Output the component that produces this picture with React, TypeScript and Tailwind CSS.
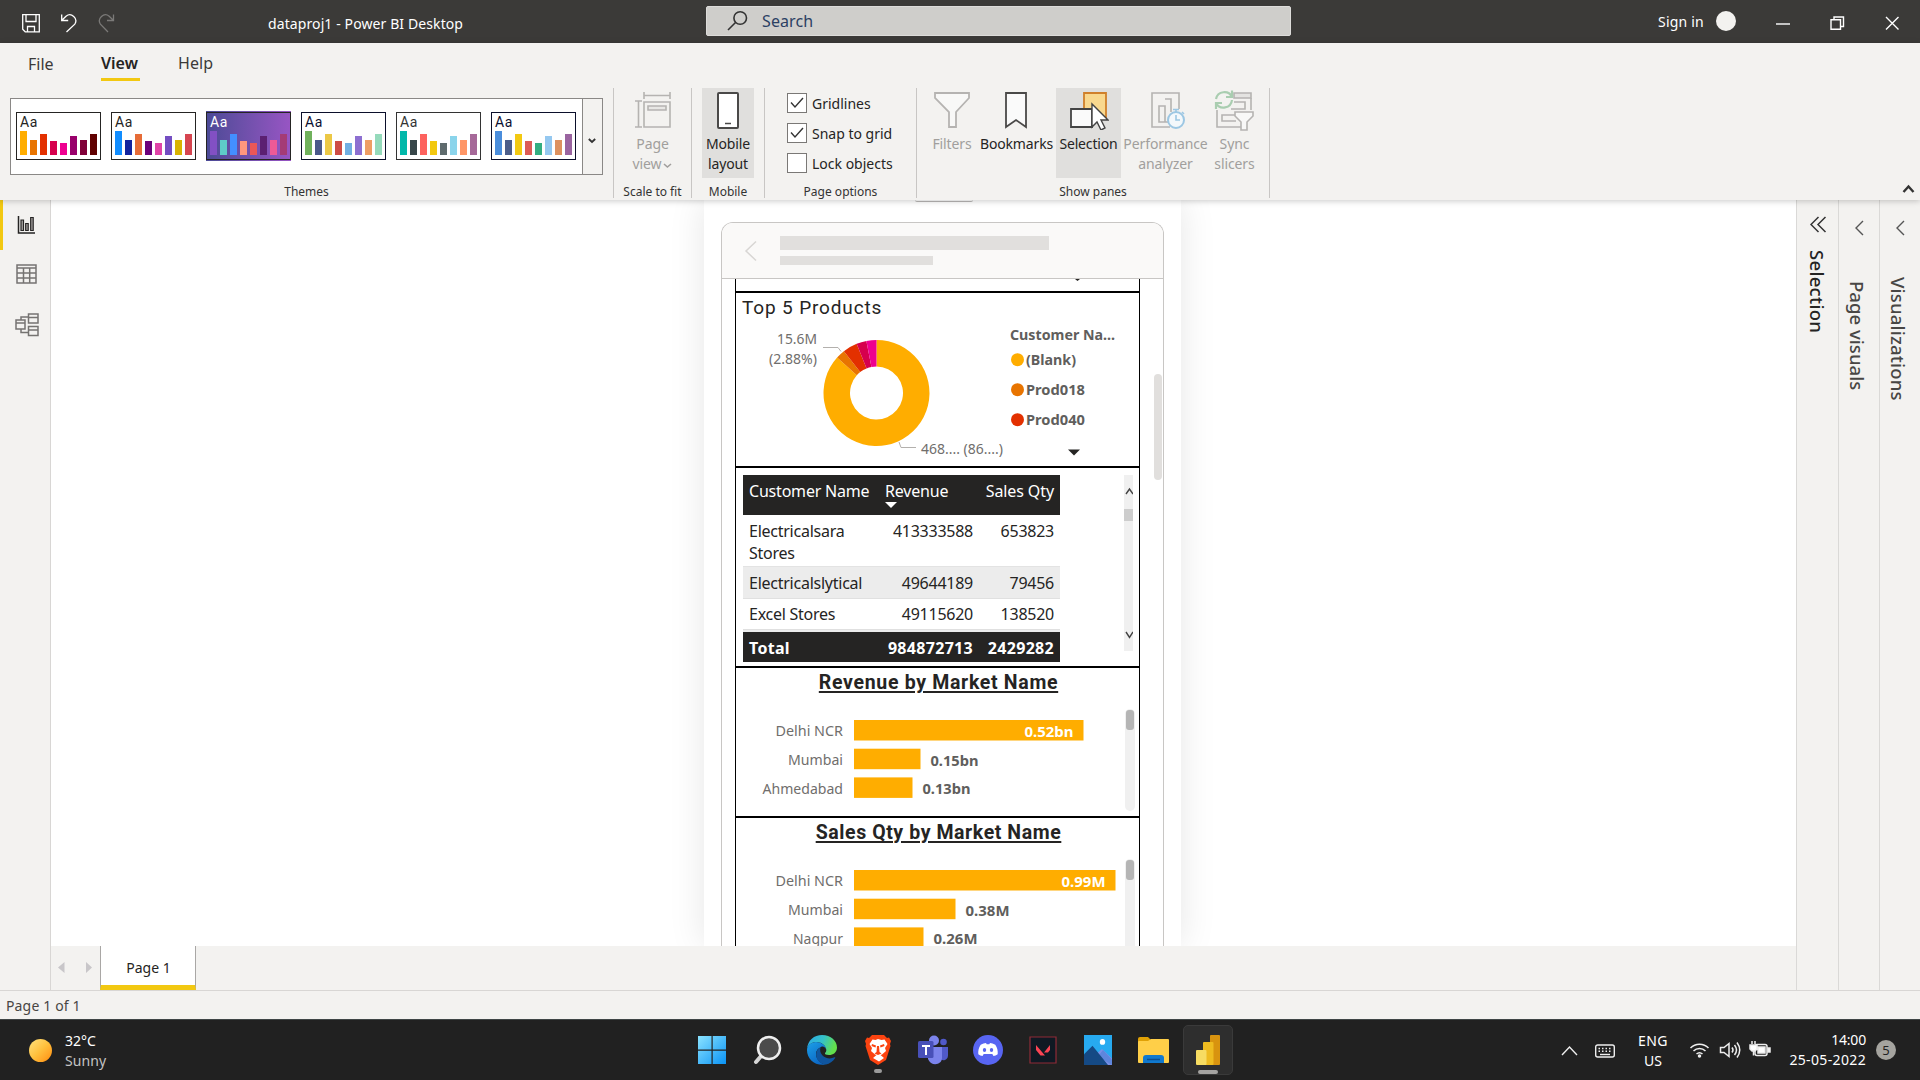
import React from 'react';

const THEMES = [
  { border: 'border-[#252423]', text: 'text-[#252423]', colors: ['#ffad00', '#e87400', '#e33000', '#d6004d', '#ee0090', '#99006b', '#800038', '#600000'] },
  { border: 'border-[#252423]', text: 'text-[#252423]', colors: ['#118dff', '#12239e', '#e66c37', '#6b007b', '#e044a7', '#744ec2', '#d9b300', '#d64550'] },
  { border: 'border-[#252423]', text: 'text-white', dark: true, colors: ['#8250c4', '#5ecbc8', '#438fff', '#ff977e', '#eb5757', '#5b2071', '#ec5a96', '#a43b76'] },
  { border: 'border-[#0b0f2b]', text: 'text-[#0b1030]', colors: ['#70b15c', '#4a588a', '#ecc846', '#cd4c46', '#71afe2', '#8d6fd1', '#ee9e64', '#95dabb'] },
  { border: 'border-[#333333]', text: 'text-[#333333]', colors: ['#01b8aa', '#374649', '#fd625e', '#f2c80f', '#5f6b6d', '#8ad4eb', '#fe9666', '#a66999'] },
  { border: 'border-[#0b0f2b]', text: 'text-[#0b1030]', colors: ['#4a8ddc', '#4c5d8a', '#f3c911', '#dc5b57', '#33ae81', '#95c8f0', '#dd915f', '#9a64a0'] },
];
const BAR_HEIGHTS = [24, 15, 21, 14, 12, 19, 15, 21];

function ThemeThumb({ theme }: { theme: (typeof THEMES)[number] }) {
  return (
    <div className={theme.dark ? 'bg-linear-to-r from-[#4b4a96] to-[#9855c4] py-px' : 'py-px'}>
      <div className={`flex h-12 w-[85px] flex-col border ${theme.border} ${theme.dark ? '' : 'bg-white'}`}>
        <span className={`ml-[3px] h-[18px] font-['Roboto'] text-[14px] leading-[19px] tracking-[0.5px] ${theme.text}`}>Aa</span>
        <svg className="ml-[3px]" width="80" height="24" shapeRendering="crispEdges">
          {theme.colors.map((c, i) => (
            <rect key={i} x={i * 10} y={24 - BAR_HEIGHTS[i]} width="7" height={BAR_HEIGHTS[i]} fill={c} />
          ))}
        </svg>
      </div>
    </div>
  );
}

function TitleBar() {
  return (
    <header className="flex h-[43px] shrink-0 bg-[#3b3a38] text-white">
      <div className="flex w-[706px] items-start">
        <svg className="ml-[22px] mt-[14px]" width="94" height="19" fill="none" stroke="#fff" strokeWidth="1.3">
          <path d="M.7.7h16.6v17.1H3.2L.7 15.3zM4 .7v6.8h10V.7M5.5 17.5v-5h7v5" />
          <path d="M39.7 .5v6h6.5M39.9 6.3 44 2.2a6 6 0 0 1 8.8 7.9L44.5 18" />
          <path stroke="#7b7a78" d="M91.5 .5v6h-6.5M91.3 6.3 87.2 2.2a6 6 0 0 0-8.8 7.9L86 18" />
        </svg>
        <span className="ml-[152px] mt-[14px] text-[14px] leading-[20px] whitespace-nowrap tracking-[0.1px]">dataproj1 - Power BI Desktop</span>
      </div>
      <div className="mt-[6px] flex h-[30px] w-[585px] items-center rounded-[2px] border border-[#dddcda] bg-[#cfcecb]">
        <svg className="ml-[20px]" width="22" height="22" fill="none" stroke="#333" strokeWidth="1.6">
          <circle cx="13.2" cy="8" r="6.3" />
          <path d="M8.5 12.5 1 20" />
        </svg>
        <span className="ml-[13px] text-[16px] leading-[28px] text-[#2b4063] tracking-[0.1px]">Search</span>
      </div>
      <span className="ml-[367px] mt-[12px] text-[14px] leading-[20px] tracking-[0.2px]">Sign in</span>
      <div className="ml-auto mr-[19px] mt-[11px] flex">
        <span className="size-5 rounded-full bg-[#f3f2f0]" />
        <svg className="ml-[39px]" width="126" height="22" fill="none" stroke="#fff" strokeWidth="1.4">
          <path d="M1 13h14" />
          <path d="M56 8.7h9.5v9.5H56zM59 8.5V6h9.5v9.5h-3" />
          <path d="m111 6 12.5 12.5M123.5 6 111 18.5" />
        </svg>
      </div>
    </header>
  );
}

function Check({ label, on }: { label: string; on?: boolean }) {
  return (
    <div className="flex h-[30px] items-center">
      <span className="flex size-[20px] items-center justify-center border border-[#7a7876] bg-white">
        {on && (
          <svg width="14" height="12" fill="none" stroke="#333" strokeWidth="1.4"><path d="m1 5.5 4 4.5 8-9" /></svg>
        )}
      </span>
      <span className="mt-[2px] ml-[5px] text-[14px] leading-5 text-[#252423]">{label}</span>
    </div>
  );
}

function RibbonButton({ icon, lines, width, active, disabled }: { icon: React.ReactNode; lines: React.ReactNode[]; width: string; active?: boolean; disabled?: boolean }) {
  return (
    <div className={`flex h-[90px] shrink-0 flex-col items-center ${width} ${active ? 'bg-[#e0dfdd]' : ''}`}>
      <div className="flex h-[46px] items-start pt-[2px]">{icon}</div>
      {lines.map((l, i) => (
        <span key={i} className={`flex items-center text-[14px] leading-[20px] whitespace-nowrap ${disabled ? 'tracking-[-0.1px] text-[#a19f9d]' : 'tracking-[-0.15px] text-[#252423]'}`}>{l}</span>
      ))}
    </div>
  );
}

function Group({ label, width, children }: { label: string; width: string; children: React.ReactNode }) {
  return (
    <div className={`flex h-[110px] shrink-0 flex-col border-r border-[#c8c6c4] ${width}`}>
      <div className="flex h-[90px] shrink-0">{children}</div>
      <span className="mt-[6px] h-[14px] text-center text-[12px] leading-[16px] whitespace-nowrap text-[#333]">{label}</span>
    </div>
  );
}

const g = '#b5b3b1';

function Ribbon() {
  return (
    <div className="relative z-10 flex h-[157px] shrink-0 flex-col bg-[#f3f2f0] shadow-[0_1px_6px_rgba(0,0,0,0.22)]">
      <nav className="flex h-[45px] items-start pl-[28px] text-[16px] text-[#3b3a39]">
        <span className="mt-[9px] w-[73px] leading-[24px]">File</span>
        <span className="mt-[8px] mr-[38px] h-[30px] w-[39px] border-b-[3px] border-[#f2c811] leading-[24px] font-semibold text-[#252423]">View</span>
        <span className="mt-[8px] leading-[24px] tracking-[0.1px]">Help</span>
      </nav>
      <div className="flex">
        <Group label="Themes" width="w-[614px]">
          <div className="mt-[10px] ml-[10px] flex h-[77px] w-[593px] items-center border border-[#8a8886] bg-white">
            <div className="flex h-full w-[571px] items-center gap-[10px] pb-px pl-[5px]">
              {THEMES.map((t, i) => <ThemeThumb key={i} theme={t} />)}
            </div>
            <div className="flex h-full flex-1 items-center justify-center border-l border-[#8a8886] bg-[#f3f2f0] pt-[8px] pr-[2px]">
              <svg width="8" height="6" fill="none" stroke="#333" strokeWidth="1.8"><path d="m.8 1 3.2 3 3.2-3" /></svg>
            </div>
          </div>
        </Group>
        <Group label="Scale to fit" width="w-[78px]">
          <RibbonButton disabled width="w-full" lines={['Page', <>view<svg className="mt-1 ml-[2px]" width="9" height="6" fill="none" stroke="#a19f9d" strokeWidth="1.6"><path d="m1 1 3.4 3L8 1" /></svg></>]}
            icon={
              <svg className="mr-px" width="37" height="40" fill="none" stroke={g} strokeWidth="1.6">
                <path d="M10 2v7M36 2v7M10 5.5h26M1 11h7M1 37h7M4.500 11v26M10 12h26v25H10z" /><path fill="#e8e7e5" d="M14 16h18v4H14z" />
              </svg>
            } />
        </Group>
        <Group label="Mobile" width="w-[73px]">
          <div className="w-[10px]" />
          <RibbonButton active width="w-[52px]" lines={['Mobile', 'layout']}
            icon={<svg className="mr-px" width="24" height="40" fill="#fff" stroke="#4a4948" strokeWidth="2"><rect x="2" y="3" width="20" height="35" rx="1" /><path d="M9 33.500h6" strokeWidth="1.5" /></svg>} />
        </Group>
        <Group label="Page options" width="w-[152px]">
          <div className="flex flex-col pl-[22px]">
            <Check label="Gridlines" on />
            <Check label="Snap to grid" on />
            <Check label="Lock objects" />
          </div>
        </Group>
        <Group label="Show panes" width="w-[353px]">
          <div className="w-[10px]" />
          <RibbonButton disabled width="w-[50px]" lines={['Filters']}
            icon={<svg className="mr-px" width="36" height="40" fill="#f8f8f7" stroke={g} strokeWidth="1.800"><path d="M1 3h34v5L22 22v15h-7V22L1 8z" /></svg>} />
          <RibbonButton width="w-[79px]" lines={['Bookmarks']}
            icon={<svg className="mr-[2px]" width="24" height="40" fill="#fafafa" stroke="#4a4948" strokeWidth="1.800"><path d="M2 3h20v34l-10-7-10 7z" /></svg>} />
          <RibbonButton active width="w-[65px]" lines={['Selection']}
            icon={
              <svg width="40" height="40">
                <path d="M15 3h22v24H15z" fill="#f9d88e" stroke="#d0802b" strokeWidth="1.800" />
                <path d="M2 19h21v18H2z" fill="#fafafa" stroke="#444" strokeWidth="1.800" />
                <path d="M23 14v23l5-5 4 8 4-2-4-8h7z" fill="#fff" stroke="#444" strokeWidth="1.400" />
              </svg>
            } />
          <RibbonButton disabled width="w-[89px]" lines={['Performance', 'analyzer']}
            icon={
              <svg className="ml-[4px]" width="36" height="40" fill="none" stroke={g} strokeWidth="1.600">
                <path d="M20 37H2V3h27v16M9 16h6v16H9zM15 9h6v13M15 32h3" />
                <circle cx="26" cy="30" r="8" fill="#f3f8fb" stroke="#9cc7e3" strokeWidth="2" />
                <path stroke="#9cc7e3" d="M26 25v5h4M23 19.500h6M26 20v2M32 22l2 2" />
              </svg>
            } />
          <RibbonButton disabled width="w-[49px]" lines={['Sync', 'slicers']}
            icon={
              <svg className="mr-px" width="40" height="42" fill="none" stroke={g} strokeWidth="1.600">
                <path fill="#e4e3e1" d="M20 3h17v5H20z" /><path d="M37 8v12M20 12h11v7H17M3 20v17h25M21 25H8v6h14" />
                <path fill="#f8f8f7" d="M21 22h18v4l-6 6v8h-6v-8l-6-6z" />
                <path stroke="#a9cdb0" strokeWidth="2.200" d="M2 9A8.500 8.500 0 0 1 18 7M18 .500V7h-6M18 10A8.500 8.500 0 0 1 2 13M2 19v-6h6" />
              </svg>
            } />
        </Group>
        <svg className="mt-[96px] mr-[5px] ml-auto" width="13" height="10" fill="none" stroke="#333" strokeWidth="2.4"><path d="m1.500 8 5-5.500 5 5.500" /></svg>
      </div>
    </div>
  );
}

function LeftRail() {
  return (
    <aside className="flex w-[51px] shrink-0 flex-col border-r border-[#d8d6d4] bg-[#f3f2f0]">
      <div className="flex h-[50px] border-l-[3px] border-[#f2c811] pt-[15px] pl-[14px]">
        <svg width="19" height="20" fill="none" stroke="#252423" strokeWidth="1.500">
          <path d="M1.500 1v17H18" /><path fill="#a8a6a4" strokeWidth="1.200" d="M4 5h2.500v10.500H4zM8.700 8.500h2.500v7H8.700zM13.700 2.500h2.500v13h-2.500z" />
        </svg>
      </div>
      <svg className="mt-[14px] ml-[16px]" width="21" height="20" fill="none" stroke="#757371" strokeWidth="1.500">
        <path d="M1 1h19v18H1zM1 4h19M1 9h19M1 14h19M7.500 4v15M13.700 4v15" />
      </svg>
      <svg className="mt-[29px] ml-[15px]" width="24" height="24" fill="none" stroke="#757371" strokeWidth="1.500">
        <path d="M1 7h9v9H1zM1 10h9M13.500 1H23v9h-9.500zM13.500 4.500H23M13.500 13.500H23v9h-9.500zM13.500 17H23M6 7V4h7.500M6 16v3.500h7.500" />
      </svg>
    </aside>
  );
}

const rad = (d: number) => (d * Math.PI) / 180;
function slice(cx: number, cy: number, R: number, r: number, a: number, b: number) {
  const p = (q: number, t: number) => `${cx + q * Math.sin(rad(t))} ${cy - q * Math.cos(rad(t))}`;
  const big = b - a > 180 ? 1 : 0;
  return `M${p(R, a)}A${R} ${R} 0 ${big} 1 ${p(R, b)}L${p(r, b)}A${r} ${r} 0 ${big} 0 ${p(r, a)}Z`;
}
const SLICES: [number, number, string][] = [
  [0, 312, '#ffad00'], [312, 322, '#e87400'], [322, 338, '#e33000'], [338, 349, '#d6004d'], [349, 360, '#ee0090'],
];

function Donut() {
  return (
    <svg width="403" height="130" className="block" fontFamily="'Noto Sans', sans-serif" fontSize="15">
      {SLICES.map(([a, b, c]) => <path key={c} d={slice(140.5, 66, 53, 26.5, a, b)} fill={c} />)}
      <path d="M87 20.500h15l3 4M163 115l2 5.500h15" fill="none" stroke="#b3b0ad" />
      <g fill="#706e6c" fontWeight="400">
        <text x="81" y="17" textAnchor="end" textLength="40" lengthAdjust="spacingAndGlyphs">15.6M</text>
        <text x="81" y="36.500" textAnchor="end" textLength="48" lengthAdjust="spacingAndGlyphs">(2.88%)</text>
        <text x="185" y="126.500" textLength="82" lengthAdjust="spacingAndGlyphs">468.... (86....)</text>
      </g>
      <g fill="#605e5c" fontWeight="700">
        <text x="274" y="13" textLength="105" lengthAdjust="spacingAndGlyphs">Customer Na...</text>
        <text x="290" y="38" textLength="50" lengthAdjust="spacingAndGlyphs">(Blank)</text>
        <text x="290" y="68" textLength="59" lengthAdjust="spacingAndGlyphs">Prod018</text>
        <text x="290" y="98" textLength="59" lengthAdjust="spacingAndGlyphs">Prod040</text>
      </g>
      <circle cx="281.500" cy="32.700" r="6.500" fill="#ffad00" />
      <circle cx="281.500" cy="62.700" r="6.500" fill="#e87400" />
      <circle cx="281.500" cy="92.700" r="6.500" fill="#e33000" />
      <path d="M332 122.500h12l-6 6z" fill="#252423" />
    </svg>
  );
}

type Bar = { name: string; nameW: number; w: number; value: string; valueW: number; inside?: boolean };
const REVENUE: Bar[] = [
  { name: 'Delhi NCR', nameW: 67.500, w: 229.500, value: '0.52bn', valueW: 49, inside: true },
  { name: 'Mumbai', nameW: 55, w: 66.500, value: '0.15bn', valueW: 48 },
  { name: 'Ahmedabad', nameW: 80.500, w: 58.500, value: '0.13bn', valueW: 48 },
];
const QTY: Bar[] = [
  { name: 'Delhi NCR', nameW: 67.500, w: 261.500, value: '0.99M', valueW: 44, inside: true },
  { name: 'Mumbai', nameW: 55, w: 101.500, value: '0.38M', valueW: 44 },
  { name: 'Nagpur', nameW: 50, w: 69.500, value: '0.26M', valueW: 44 },
];

function BarChart({ bars }: { bars: Bar[] }) {
  return (
    <svg width="403" height="106" className="block" fontFamily="'Noto Sans', sans-serif" fontSize="15">
      {bars.map((b, i) => {
        const y = 12 + i * 28.700;
        return (
          <g key={b.name}>
            <rect x="118" y={y} width={b.w} height="20.500" fill="#ffad00" />
            <text x="107" y={y + 16.200} textAnchor="end" fontWeight="400" fill="#706e6c" textLength={b.nameW} lengthAdjust="spacingAndGlyphs">{b.name}</text>
            <text x={b.inside ? 118 + b.w - 10 : 118 + b.w + 10} y={y + 17} textAnchor={b.inside ? 'end' : 'start'} fontWeight="700" fill={b.inside ? '#fff' : '#605e5c'} textLength={b.valueW} lengthAdjust="spacingAndGlyphs">{b.value}</text>
          </g>
        );
      })}
      <rect x="389" y="1" width="10" height="102" rx="5" fill="#f0f0f0" />
      <rect x="390" y="2" width="8" height="20" rx="3" fill="#b5b5b5" />
    </svg>
  );
}

function Row({ cells, className }: { cells: [string, string, string]; className: string }) {
  return (
    <div className={`grid w-[317px] grid-cols-[120px_104px_81px] pl-[6px] text-[16px] leading-[22px] ${className}`}>
      <span>{cells[0]}</span>
      <span className="text-right">{cells[1]}</span>
      <span className="text-right">{cells[2]}</span>
    </div>
  );
}

function Phone() {
  return (
    <div className="flex h-[746px] w-[477px] shrink-0 flex-col items-center bg-white shadow-[0_0_34px_rgba(0,0,0,0.10)]">
      <div className="ml-[2px] h-[2px] w-[58px] rounded-b-[4px] border-b border-[#b9b7b5]" />
      <div className="relative mt-[20px] flex h-[724px] w-[443px] flex-col overflow-hidden rounded-t-[12px] border border-b-0 border-[#c8c6c4]">
        <div className="flex h-[56px] shrink-0 border-b border-[#c8c6c4] bg-[#faf9f8]">
          <svg className="mt-[17px] ml-[22px]" width="14" height="22" fill="none" stroke="#d8d6d4" strokeWidth="1.500"><path d="M12 1.500 2 11l10 9.500" /></svg>
          <div className="mt-[13px] ml-[22px]">
            <div className="h-[14px] w-[269px] bg-[#e1dfdd]" />
            <div className="mt-[6px] h-[9px] w-[153px] bg-[#e1dfdd]" />
          </div>
        </div>
        <div className="ml-[13px] flex w-[405px] shrink-0 flex-col border-x border-black">
          <div className="flex h-[14px] border-b-2 border-black">
            <svg className="ml-[339px]" width="6" height="3"><path d="M0 0h5L2.500 2z" fill="#252423" /></svg>
          </div>
          <section className="h-[175px] border-b-2 border-black">
            <h2 className="h-[34px] pt-[2px] pl-[6px] font-['Roboto'] text-[19px] leading-[26px] tracking-[0.850px] text-[#252423]">Top 5 Products</h2>
            <Donut />
          </section>
          <section className="flex h-[200px] justify-between border-b-2 border-black pt-[7px] pr-[6px] pl-[7px]">
            <div className="flex h-[187px] flex-col text-[#252423]">
              <div className="grid h-[40px] w-[317px] grid-cols-[136px_93px_76px] bg-[#252423] pt-[5px] pl-[6px] text-[16px] leading-[22px] tracking-[-0.2px] text-white">
                <span className="whitespace-nowrap">Customer Name</span>
                <span className="flex flex-col">Revenue<svg width="12" height="6"><path d="M0 0h12L6 6z" fill="#fff" /></svg></span>
                <span className="text-right tracking-[-0.1px] whitespace-nowrap">Sales Qty</span>
              </div>
              <Row className="h-[52px] border-b border-[#e3e3e3] pt-[5px] tracking-[-0.25px]" cells={['Electricalsara Stores', '413333588', '653823']} />
              <Row className="h-[32px] border-b border-[#e0e0e0] bg-[#ececec] pt-[5px] tracking-[-0.25px]" cells={['Electricalslytical', '49644189', '79456']} />
              <Row className="h-[31px] border-b border-[#e0e0e0] pt-[4px] tracking-[-0.25px]" cells={['Excel Stores', '49115620', '138520']} />
              <div className="h-[2px] bg-[#ececec]" />
              <Row className="h-[30px] bg-[#252423] pt-[5px] font-bold tracking-[0.3px] text-white" cells={['Total', '984872713', '2429282']} />
            </div>
            <svg width="9" height="176">
              <path d="M0 0h9v176H0z" fill="#f0f0f0" /><path d="M0 34h9v12H0z" fill="#cdcdcd" />
              <path d="m2 19 3.500-5L9 19M2 157l3.500 5.500L9 157" fill="none" stroke="#444" strokeWidth="1.400" />
            </svg>
          </section>
          <section className="h-[150px] border-b-2 border-black">
            <h2 className="h-[40px] pt-[2px] pl-[2px] text-center font-['Roboto'] text-[19.500px] leading-[26px] font-bold tracking-[0.680px] text-[#252423] underline decoration-2 underline-offset-2">Revenue by Market Name</h2>
            <BarChart bars={REVENUE} />
          </section>
          <section className="h-[150px]">
            <h2 className="h-[40px] pt-[2px] pl-[2px] text-center font-['Roboto'] text-[19.500px] leading-[26px] font-bold tracking-[0.580px] text-[#252423] underline decoration-2 underline-offset-2">Sales Qty by Market Name</h2>
            <BarChart bars={QTY} />
          </section>
        </div>
        <div className="absolute top-[151px] right-[1px] h-[106px] w-[8px] rounded-full bg-[#e1dfdd]" />
      </div>
    </div>
  );
}

function SidePane({ title, className, children, textClass }: { title: string; className: string; children: React.ReactNode; textClass: string }) {
  return (
    <aside className={`flex shrink-0 flex-col items-start border-l border-[#dad9d7] bg-[#f3f2f0] ${className}`}>
      {children}
      <span className={`leading-[24px] whitespace-nowrap [writing-mode:vertical-rl] ${textClass}`}>{title}</span>
    </aside>
  );
}

const Slot = ({ children }: { children: React.ReactNode }) => (
  <div className="flex size-[50px] items-center justify-center">{children}</div>
);

function Taskbar() {
  return (
    <footer className="flex h-[61px] shrink-0 border-t border-[#3f4546] bg-[#212121] text-white">
      <div className="flex w-[687px] pl-[29px]">
        <span className="mt-[19px] size-[23px] rounded-full bg-linear-to-br from-[#ffe27a] via-[#ffc03c] to-[#ff8a00]" />
        <div className="mt-[11px] ml-[13px] flex flex-col text-[14px] leading-[20px]">
          <span>32°C</span>
          <span className="tracking-[0.1px] text-[#c4c4c4]">Sunny</span>
        </div>
      </div>
      <div className="flex gap-[5px] pt-[5px]">
        <Slot>
          <svg width="30" height="30" viewBox="0 0 30 30">
            <defs><linearGradient id="win" x1="0" y1="0" x2="1" y2="1"><stop offset="0" stopColor="#8be3ff" /><stop offset="1" stopColor="#0a93f5" /></linearGradient></defs>
            <path fill="url(#win)" d="M1 1h13.500v13.500H1zM15.700 1H29v13.500H15.700zM1 15.700h13.500V29H1zM15.700 15.700H29V29H15.700z" />
          </svg>
        </Slot>
        <Slot>
          <svg width="30" height="30" fill="#4b4b4b" stroke="#eee"><path strokeWidth="4" strokeLinecap="round" stroke="#d6d6d6" d="m10 20-6 7" /><circle cx="17" cy="13" r="11" strokeWidth="2.500" /></svg>
        </Slot>
        <Slot>
          <svg width="30" height="30" viewBox="0 0 30 30">
            <defs>
              <linearGradient id="e1" x1="0" y1="0" x2="1" y2=".3"><stop offset="0" stopColor="#2aa8e8" /><stop offset=".55" stopColor="#35c1c9" /><stop offset="1" stopColor="#63e04c" /></linearGradient>
              <linearGradient id="e2" x1="0" y1="0" x2=".6" y2="1"><stop offset="0" stopColor="#1ca0e8" /><stop offset="1" stopColor="#0b66c4" /></linearGradient>
            </defs>
            <path fill="url(#e1)" d="M0 14C1 5 7 0 15 0c9 0 15 6 15 12.500 0 5-4 7.500-8 7.500-3 0-4.500-1-4-2 1.500-1.500 1.500-3 1-4.500C17.500 9 13 7 9 7c-4 0-8 3-9 7z" />
            <path fill="url(#e2)" d="M0 15c0-4 4-8 9-8 6 0 10 4 10 7-1-2-3-3-5-2-4 2-6 5-4.500 10 1.500 4 5 7 9.500 7.500C8 31.500 0 24 0 15z" />
            <path fill="#0f559f" d="M13.500 12.500c-1 3 0 6 2.500 8.500 3.500 3 8 3 11.500 1.300.8-.3 1 .3.500 1C26 26.500 22.500 29 19 29.500 14 29 10.500 26 9.500 22c-1-4 .5-8 4-9.500z" />
          </svg>
        </Slot>
        <div className="flex flex-col items-center pl-px">
          <div className="flex h-[44px] w-[50px] items-end justify-center pb-[4px]">
            <svg width="26" height="30" viewBox="0 0 26 30">
              <path fill="#fb4310" d="M7 0h12l3 3 2-.5L26 6l-1 3 .5 2L21 25l-8 5-8-5L.5 11 1 9 0 6l2-3.500L4 3z" />
              <path fill="#fff" d="m13 4 3.500 1 3-.5 3 4.500-2.500 4 1 3-4 3.500-1.500.5 3.500 3-5 3.500L8 23l3.500-3L10 19.500 6 16l1-3-2.500-4 3-4.500 3 .5z" />
              <path fill="#fb4310" d="m7 9 4 1.500-.5 2L6.500 11zM19 9l-4 1.500.5 2 4-1.500zM12 11h2l.5 6 2 1.500L13 20l-3.500-1.500 2-1.500z" />
            </svg>
          </div>
          <span className="h-[4px] w-[8px] rounded-full bg-[#9a9a9a]" />
        </div>
        <Slot>
          <svg width="30" height="30" viewBox="0 0 30 30" fill="#7b83eb">
            <circle cx="16" cy="5.500" r="5" /><circle cx="25.500" cy="7" r="3.300" fill="#5059c9" /><path fill="#5059c9" d="M20 12h10v8c0 6-6 6-8 4z" /><path d="M10 12h14v11c0 7-11 9-14 1z" />
            <rect y="6" width="15.500" height="17" rx="1.500" fill="#4850b8" /><path fill="#fff" d="M4 10h8v2H9v8H7v-8H4z" />
          </svg>
        </Slot>
        <Slot>
          <svg width="30" height="30" viewBox="0 0 30 30">
            <circle cx="15" cy="15" r="15" fill="#5865f2" />
            <path fill="#fff" d="M10.500 8.500 13 8l.7 1.300h2.600L17 8l2.500.5 2.800 1.200c2 3 2.700 6 2.400 9.500-1.400 1-2.800 1.600-4.200 1.900l-1.200-2h-8.600l-1.200 2c-1.400-.3-2.800-.9-4.200-1.900C5 15.700 5.700 12.700 7.700 9.700z" />
            <ellipse cx="11.500" cy="15" rx="1.700" ry="2" fill="#5865f2" /><ellipse cx="18.500" cy="15" rx="1.700" ry="2" fill="#5865f2" />
          </svg>
        </Slot>
        <Slot>
          <svg width="28" height="28" viewBox="0 0 28 28"><path fill="#0f1923" stroke="#8f2b37" strokeWidth="1.200" d="M1 1h26v26H1z" /><path fill="#fa4454" d="M7 9v5l4.500 5.500H16zM21 9v5l-2 2.500h-4z" /></svg>
        </Slot>
        <Slot>
          <svg width="28" height="30" viewBox="0 0 28 28" preserveAspectRatio="none"><path fill="#27aaf0" d="M0 0h28v28H0z" /><path fill="#7a8fe6" d="m12 18 6-5 10 9v6H16z" /><path fill="#5e86dd" d="M14 20l5-6 9 9v5z" /><path fill="#154a85" d="M0 18 8.500 10 24 28H0z" /><circle cx="18.500" cy="6.500" r="2.700" fill="#fff" /></svg>
        </Slot>
        <Slot>
          <svg width="31" height="28" viewBox="0 0 31 28"><path fill="#e0a106" d="M0 3q0-2 2-2h8l3 3v6H0z" /><path fill="#ffcf48" d="M0 6q0-1 1-1h9l3-2h17q1 0 1 1v22q0 1-1 1H1q-1 0-1-1z" /><path fill="#1079cf" d="M5 27v-5q0-3 3-3h15q3 0 3 3v5z" /><path stroke="#0a4f93" strokeWidth="1.500" d="M9 23.500h13" /></svg>
        </Slot>
        <div className="flex size-[50px] flex-col items-center rounded-[5px] border border-[#3a3a3a] bg-[#2e2e2e] pt-[9px]">
          <svg width="24" height="30" viewBox="0 0 24 30" className="shrink-0">
            <rect x="14" width="10" height="30" rx="1" fill="#d8930f" /><rect x="7" y="7" width="10.500" height="23" rx="1" fill="#eebb20" /><rect y="15" width="10.500" height="15" rx="1" fill="#f7dc62" />
          </svg>
          <span className="mt-[5px] h-[4px] w-[20px] shrink-0 rounded-full bg-[#a5a3a1]" />
        </div>
      </div>
      <div className="ml-auto flex pr-[24px]">
        <svg className="mt-[24px]" width="56" height="16" fill="none" stroke="#eee" strokeWidth="1.400">
          <path d="m2 11 7.500-8 7.500 8" />
          <rect x="35.700" y="1" width="18.600" height="12" rx="2" /><path d="M38.500 4.500h13M38.500 7.300h13" strokeDasharray="1.500 2" /><path d="M40 10.500h10" />
        </svg>
        <div className="ml-[13px] mt-[11px] flex w-[48px] flex-col items-center text-[14px] leading-[20px]">
          <span className="tracking-[0.4px]">ENG</span><span>US</span>
        </div>
        <svg className="mt-[20px] ml-[12px]" width="82" height="20" fill="none" stroke="#eee" strokeWidth="1.500">
          <path d="M1.500 8a12.500 12.500 0 0 1 18 0M4.500 11a8.500 8.500 0 0 1 12 0M7.500 14a4.500 4.500 0 0 1 6 0" /><circle cx="10.500" cy="16" r="1" fill="#fff" />
          <path d="M31.500 7.500H35l5-4v13l-5-4h-3.500zM43 7.500q2 2.500 0 5M45.500 5q4 5 0 10M48 2.500q5.500 7.500 0 15" />
          <rect x="66" y="4.500" width="12" height="11" rx="2" /><path fill="#fff" d="M69 7h7v6h-7zM79 8h2v4h-2zM61 5h7v4l-2 2h-3l-2-2z" /><path d="M63 1v3M66 1v3M64.500 10v5.500" />
        </svg>
        <div className="mt-[10px] ml-[16px] flex w-[79px] flex-col items-end text-[14px] leading-[20px] whitespace-nowrap">
          <span className="tracking-[-0.200px]">14:00</span><span className="tracking-[0.350px]">25-05-2022</span>
        </div>
        <span className="mt-[20px] ml-[10px] size-5 rounded-full bg-[#a5a49f] text-center text-[13px] leading-5 text-[#222]">5</span>
      </div>
    </footer>
  );
}

export default function App() {
  return (
    <div className="flex h-[1080px] w-[1920px] flex-col overflow-hidden bg-white font-['Noto_Sans',sans-serif]">
      <TitleBar />
      <Ribbon />
      <div className="flex h-[790px] shrink-0">
        <LeftRail />
        <main className="flex flex-1 flex-col">
          <div className="flex h-[746px] overflow-hidden pl-[653px]">
            <Phone />
          </div>
          <div className="flex h-[44px] bg-[#f3f2f0]">
            <svg className="mt-[16px] ml-[6px] mr-[7px]" width="36" height="12" fill="#c8c6c9"><path d="M7.500 0v11L1 5.500zM29 0v11l6-5.500z" /></svg>
            <div className="w-[96px] border-x border-b-[5px] border-x-[#a9a7a5] border-b-[#f2c811] bg-white pl-px text-center text-[14px] leading-[43px] text-[#252423]">Page 1</div>
          </div>
        </main>
        <SidePane title="Selection" className="w-[42px]" textClass="mt-[16px] ml-[8px] text-[18.500px] font-medium text-[#252423] tracking-[0.300px]">
          <svg className="mt-[16px] ml-[13px]" width="17" height="18" fill="none" stroke="#333" strokeWidth="1.500"><path d="M8.500 1 1 8.500 8.500 16M15.500 1 8 8.500l7.500 7.500" /></svg>
        </SidePane>
        <SidePane title="Page visuals" className="w-[41px]" textClass="mt-[45px] ml-[6px] text-[18.500px] font-medium text-[#484644] tracking-[0.050px]">
          <svg className="mt-[20px] ml-[16px]" width="9" height="16" fill="none" stroke="#555" strokeWidth="1.400"><path d="M8 1 1 8l7 7" /></svg>
        </SidePane>
        <SidePane title="Visualizations" className="w-[41px]" textClass="mt-[41px] ml-[6px] text-[18.500px] font-medium text-[#484644] tracking-[0.200px]">
          <svg className="mt-[20px] ml-[16px]" width="9" height="16" fill="none" stroke="#555" strokeWidth="1.400"><path d="M8 1 1 8l7 7" /></svg>
        </SidePane>
      </div>
      <div className="h-[29px] shrink-0 border-t border-[#d8d6d4] bg-[#f3f2f0] pl-[6px] text-[14px] leading-[30px] tracking-[0.150px] text-[#484644]">Page 1 of 1</div>
      <Taskbar />
    </div>
  );
}
